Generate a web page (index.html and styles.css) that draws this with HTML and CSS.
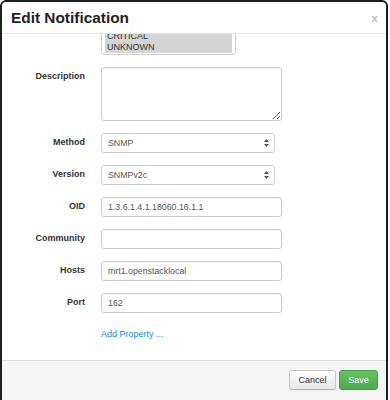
FILE: index.html
```html
<!DOCTYPE html>
<html lang="en">
<head>
    <meta charset="UTF-8">
    <meta name="viewport" content="width=device-width, initial-scale=1.0">
    <title>Edit Notification</title>
    <link rel="stylesheet" href="styles.css">
</head>
<body>
    <div class="modal">
        <div class="modal-header">
            <h3>Edit Notification</h3>
            <span class="close">x</span>
        </div>
        <div class="modal-body">
            <form class="form">
                <div class="form-row">
                    <label></label>
                    <div class="listbox">
                        <div class="option">OK</div>
                        <div class="option">WARNING</div>
                        <div class="option selected">CRITICAL</div>
                        <div class="option selected">UNKNOWN</div>
                    </div>
                </div>
                <div class="form-row">
                    <label for="description">Description</label>
                    <textarea id="description"></textarea>
                </div>
                <div class="form-row">
                    <label>Method</label>
                    <div class="select">
                        <span>SNMP</span>
                        <svg width="5" height="8" viewBox="0 0 5 8"><path d="M2.5 0 L5 3 L0 3 Z M0 5 L5 5 L2.5 8 Z" fill="#555"/></svg>
                    </div>
                </div>
                <div class="form-row">
                    <label>Version</label>
                    <div class="select">
                        <span>SNMPv2c</span>
                        <svg width="5" height="8" viewBox="0 0 5 8"><path d="M2.5 0 L5 3 L0 3 Z M0 5 L5 5 L2.5 8 Z" fill="#555"/></svg>
                    </div>
                </div>
                <div class="form-row">
                    <label for="oid">OID</label>
                    <input type="text" id="oid" value="1.3.6.1.4.1.18060.16.1.1">
                </div>
                <div class="form-row">
                    <label for="community">Community</label>
                    <input type="text" id="community" value="">
                </div>
                <div class="form-row">
                    <label for="hosts">Hosts</label>
                    <input type="text" id="hosts" value="mrt1.openstacklocal">
                </div>
                <div class="form-row">
                    <label for="port">Port</label>
                    <input type="text" id="port" value="162">
                </div>
                <div class="form-row">
                    <label></label>
                    <a href="#" class="add-link">Add Property ...</a>
                </div>
            </form>
        </div>
        <div class="modal-footer">
            <button class="btn">Cancel</button>
            <button class="btn btn-success">Save</button>
        </div>
    </div>
</body>
</html>
```

FILE: styles.css
```css
* {
    margin: 0;
    padding: 0;
    box-sizing: border-box;
}

body {
    font-family: 'Liberation Sans', Arial, sans-serif;
    background: #fff;
    width: 390px;
    height: 400px;
    overflow: hidden;
}

.modal {
    width: 388px;
    height: 400px;
    border: 2px solid #1e1e1e;
    border-bottom: none;
    border-radius: 6px 6px 0 0;
    background: #fff;
    display: flex;
    flex-direction: column;
    overflow: hidden;
}

.modal-header {
    height: 32px;
    flex: none;
    display: flex;
    align-items: center;
    justify-content: space-between;
    padding: 0 8px 0 9px;
    border-bottom: 1px solid #e5e5e5;
}

.modal-header h3 {
    font-size: 15.4px;
    font-weight: 700;
    color: #222;
    line-height: 20px;
}

.close {
    font-size: 11.5px;
    font-weight: 700;
    color: #bbb;
    line-height: 12px;
    margin-top: 1px;
}

.modal-body {
    flex: 1;
    overflow: hidden;
}

.form {
    display: flex;
    flex-direction: column;
    gap: 12px;
    margin-top: -28px;
}

.form-row {
    display: flex;
    align-items: flex-start;
}

.form-row label {
    width: 83px;
    margin-right: 16px;
    flex: none;
    text-align: right;
    font-size: 9px;
    font-weight: 700;
    color: #333;
    line-height: 19px;
}

.listbox {
    width: 135px;
    height: 49px;
    border: 1px solid #ccc;
    border-radius: 3px;
    padding: 2px 3px;
    background: #fff;
}

.option {
    height: 11px;
    line-height: 11px;
    font-size: 9px;
    color: #333;
    padding-left: 2px;
}

.option.selected {
    background: #d4d4d4;
}

textarea,
input {
    width: 181px;
    border: 1px solid #ccc;
    border-radius: 3px;
    background: #fff;
    box-shadow: inset 0 1px 1px rgba(0, 0, 0, 0.06);
    font-family: 'Liberation Sans', Arial, sans-serif;
    font-size: 8.8px;
    color: #555;
    outline: none;
}

textarea {
    height: 54px;
    resize: vertical;
}

input {
    height: 20px;
    padding: 0 6px;
}

.select {
    width: 174px;
    height: 20px;
    border: 1px solid #ccc;
    border-radius: 3px;
    background: #fff;
    display: flex;
    align-items: center;
    justify-content: space-between;
    padding: 0 5px 0 6px;
    font-size: 8.8px;
    color: #555;
}

.add-link {
    font-size: 9px;
    color: #1a8bd4;
    text-decoration: none;
    line-height: 18px;
}

.modal-footer {
    flex: none;
    height: 40px;
    background: #f5f5f5;
    border-top: 1px solid #ddd;
    display: flex;
    justify-content: flex-end;
    align-items: flex-start;
    gap: 3px;
    padding: 9px 8px 0 0;
}

.btn {
    height: 20px;
    width: 47px;
    font-family: 'Liberation Sans', Arial, sans-serif;
    font-size: 9px;
    color: #333;
    border: 1px solid #c8c8c8;
    border-bottom-color: #b3b3b3;
    border-radius: 3px;
    background: linear-gradient(#fff, #e6e6e6);
    box-shadow: 0 1px 1px rgba(0, 0, 0, 0.05);
}

.btn-success {
    width: 39px;
    color: #fff;
    border-color: #4a9a4a;
    background: linear-gradient(#62c462, #4fa84f);
}
```
